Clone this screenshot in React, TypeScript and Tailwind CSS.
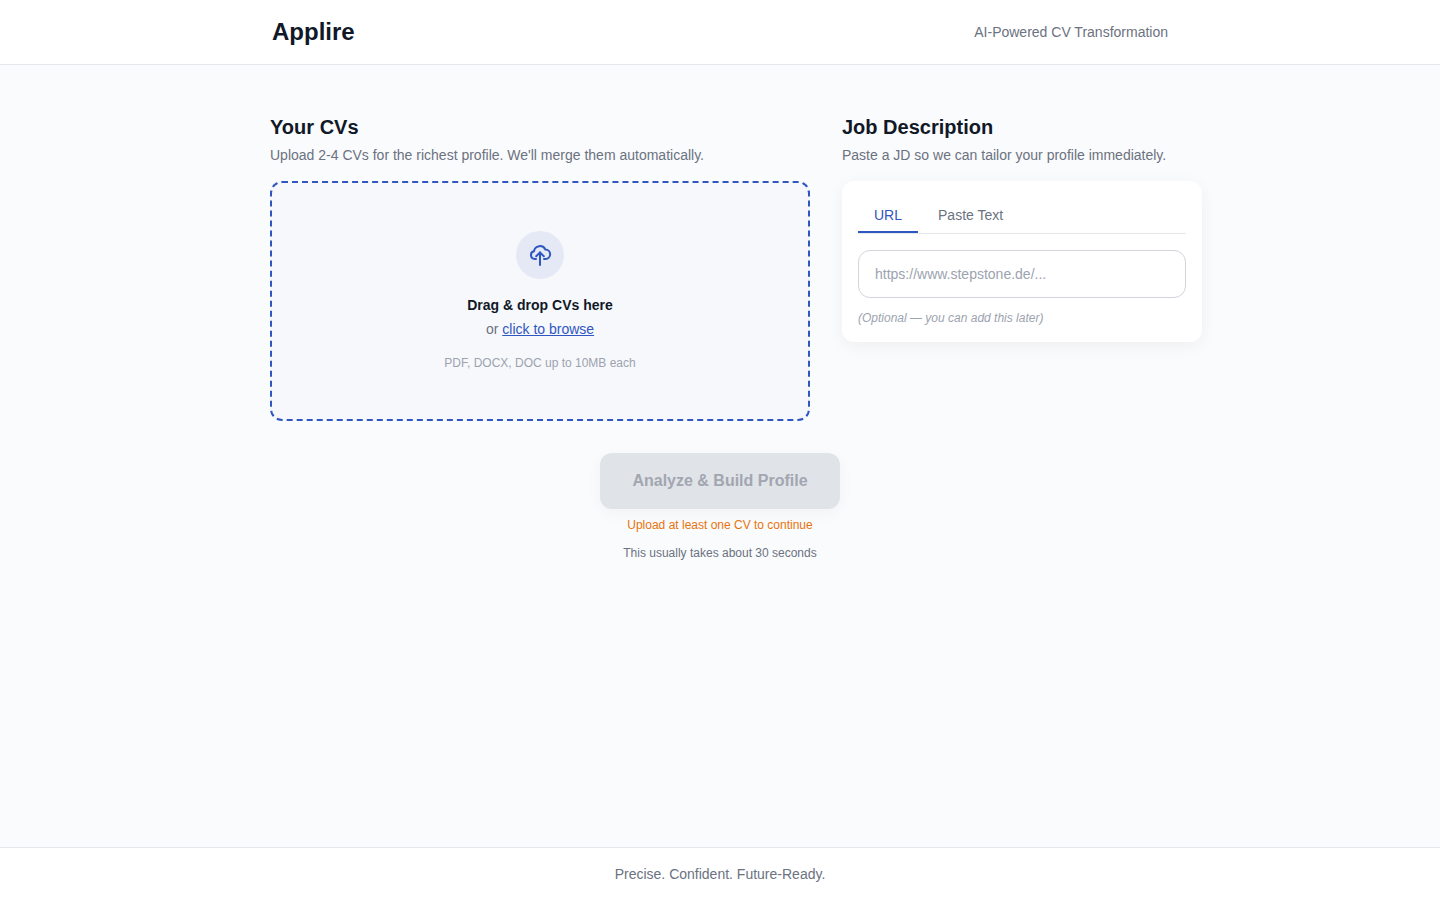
export default function App() {
  return (
    <div className="min-h-screen flex flex-col bg-[#fafbfd] font-['Liberation_Sans',Arial,sans-serif] text-[#111827]">
      <header className="bg-white border-b border-[#e5e7eb]">
        <div className="w-[896px] mx-auto h-16 flex items-center justify-between">
          <h1 className="text-2xl font-bold text-[#111827]">Applire</h1>
          <span className="text-sm text-[#6b7280]">AI-Powered CV Transformation</span>
        </div>
      </header>

      <main className="flex-1 w-[900px] mx-auto pt-12">
        <div className="grid grid-cols-[540px_360px] gap-8">
          <section>
            <h2 className="text-xl font-bold text-[#111827]">Your CVs</h2>
            <p className="mt-1 mb-4 text-sm text-[#6b7280]">Upload 2-4 CVs for the richest profile. We'll merge them automatically.</p>
            <div className="border-2 border-dashed border-[#3056c0] rounded-xl bg-[#f7f8fc] py-12 flex flex-col items-center">
              <div className="w-12 h-12 rounded-full bg-[#e4e9f5] flex items-center justify-center mb-4">
                <svg viewBox="0 0 24 24" fill="none" stroke="#3056c0" strokeWidth="2" strokeLinecap="round" strokeLinejoin="round" className="w-6 h-6">
                  <path d="M8 16H6.8a3.9 3.9 0 0 1-.8-7.7A6 6 0 0 1 17.4 6.6 4.7 4.7 0 0 1 17.5 16H16" />
                  <path d="M12 22V9.5" />
                  <path d="M8.2 13.2l3.8-3.8 3.8 3.8" />
                </svg>
              </div>
              <p className="text-sm font-bold text-[#111827]">Drag &amp; drop CVs here</p>
              <p className="mt-1 text-sm text-[#6b7280]">
                or <a href="#" className="text-[#3056c0] underline">click to browse</a>
              </p>
              <p className="mt-4 text-xs text-[#9ca3af]">PDF, DOCX, DOC up to 10MB each</p>
            </div>
          </section>

          <section>
            <h2 className="text-xl font-bold text-[#111827]">Job Description</h2>
            <p className="mt-1 mb-4 text-sm text-[#6b7280]">Paste a JD so we can tailor your profile immediately.</p>
            <div className="bg-white rounded-xl p-4 shadow-[0_4px_16px_rgba(0,0,0,0.05)]">
              <div className="flex gap-1 border-b border-[#e5e7eb] mb-4">
                <button className="px-4 pt-2 pb-1.5 text-sm text-[#3056c0] border-b-2 border-[#3056c0]">URL</button>
                <button className="px-4 pt-2 pb-1.5 text-sm text-[#6b7280] border-b-2 border-transparent">Paste Text</button>
              </div>
              <input
                type="text"
                placeholder="https://www.stepstone.de/..."
                className="block w-full h-12 px-4 rounded-xl border border-[#d1d5db] bg-white text-sm outline-none placeholder:text-[#9ca3af]"
              />
              <p className="mt-3 text-xs italic text-[#9ca3af]">(Optional — you can add this later)</p>
            </div>
          </section>
        </div>

        <div className="mt-8 flex flex-col items-center">
          <button disabled className="w-60 h-14 rounded-xl bg-[#e0e3e8] text-base font-bold text-[#a2a6b1] shadow-[0_4px_16px_rgba(0,0,0,0.04)]">
            Analyze &amp; Build Profile
          </button>
          <p className="mt-2 text-xs text-[#e8730c]">Upload at least one CV to continue</p>
          <p className="mt-3 text-xs text-[#6b7280]">This usually takes about 30 seconds</p>
        </div>
      </main>

      <footer className="bg-white border-t border-[#e5e7eb] py-4 text-center text-sm text-[#6b7280]">
        Precise. Confident. Future-Ready.
      </footer>
    </div>
  );
}
